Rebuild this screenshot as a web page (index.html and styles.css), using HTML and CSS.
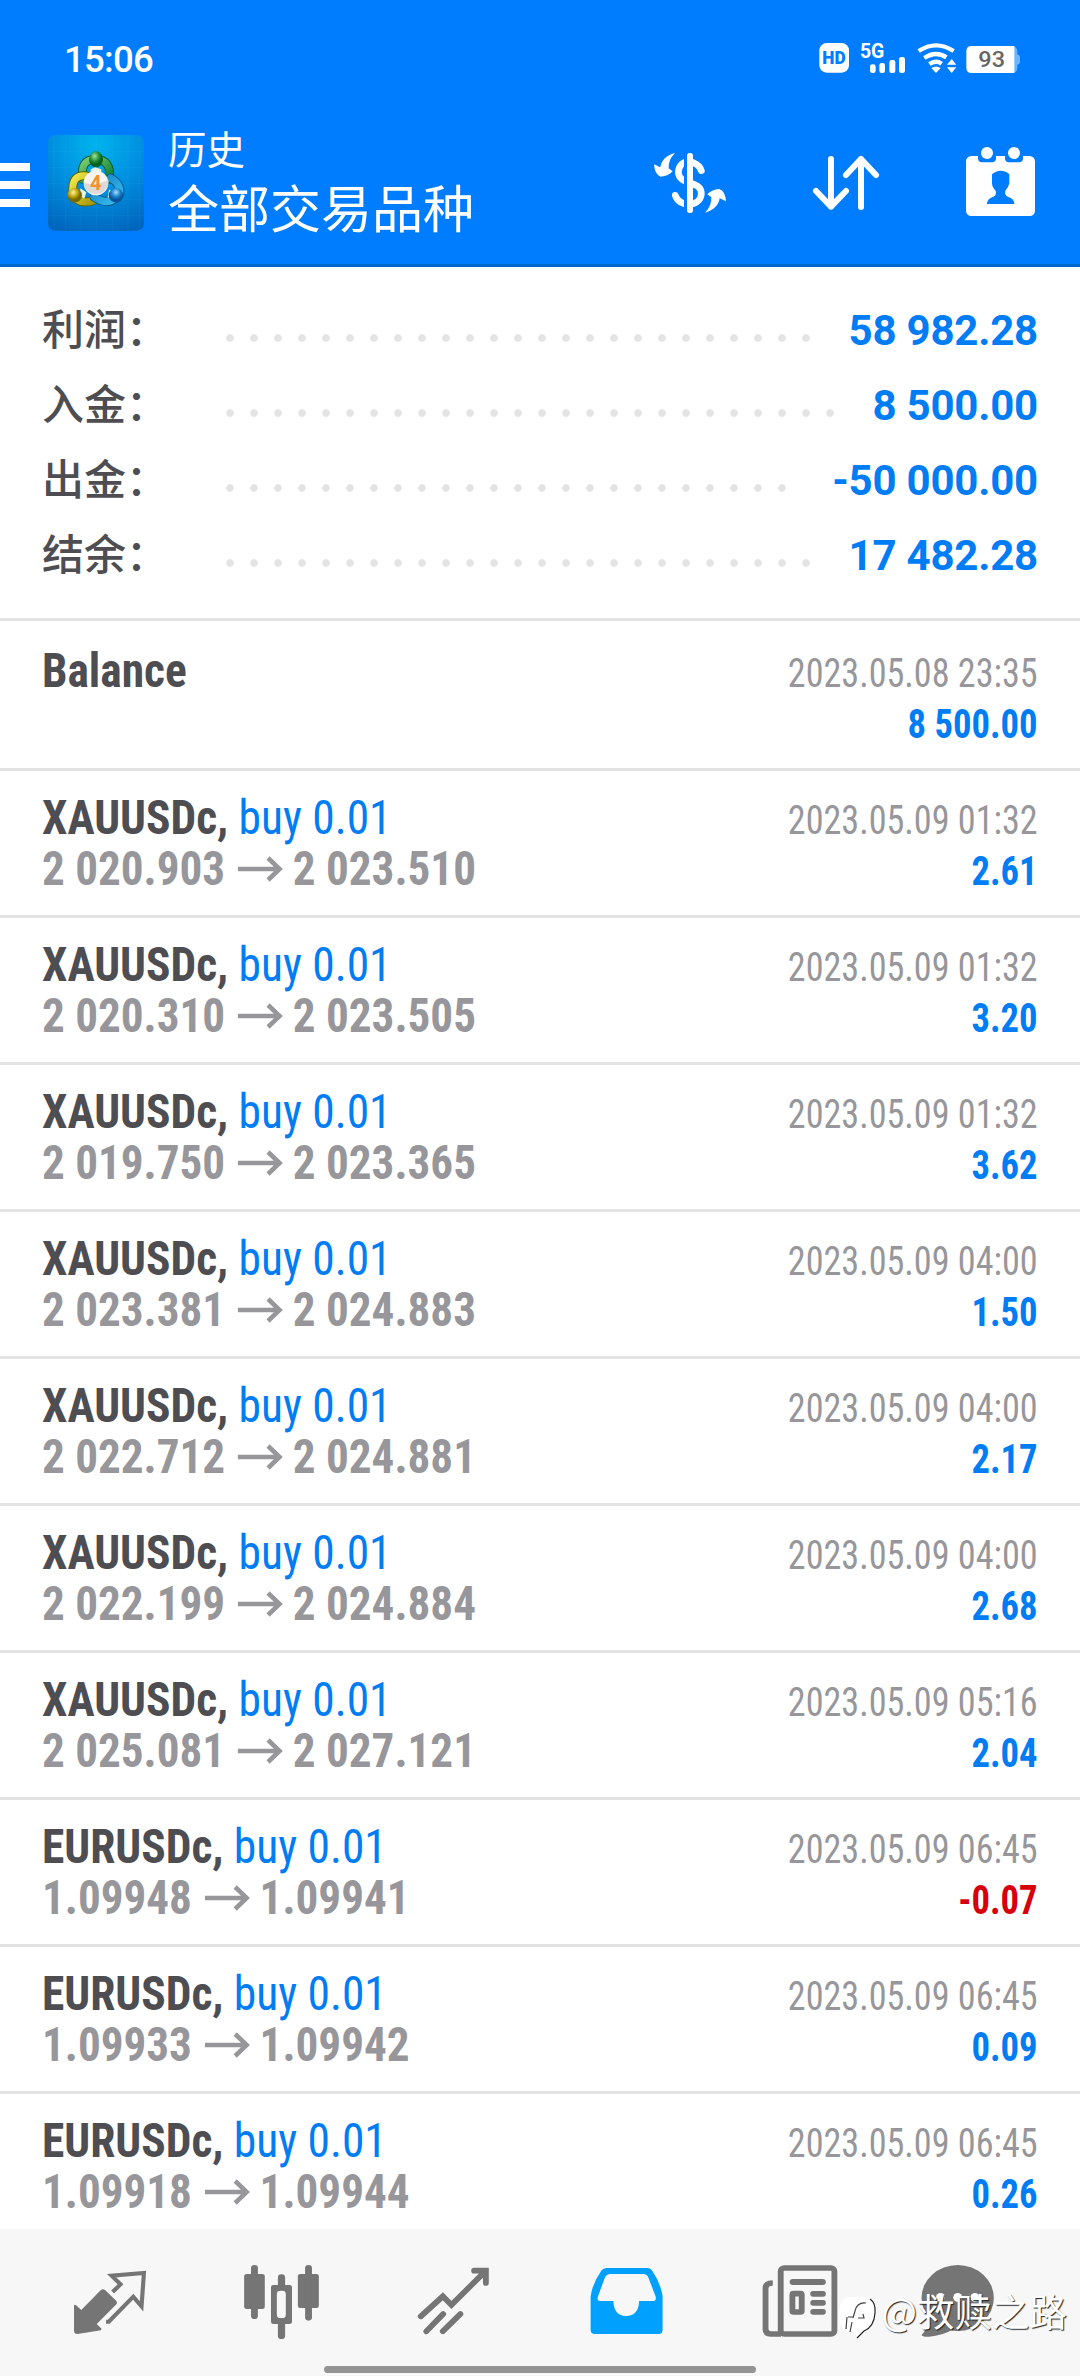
FILE: index.html
```html
<!DOCTYPE html>
<html lang="zh-CN">
<head>
<meta charset="utf-8">
<title>历史</title>
<link rel="stylesheet" href="styles.css">
</head>
<body>
<svg class="defs" width="0" height="0">
  <symbol id="arrow" viewBox="0 0 46 26" preserveAspectRatio="none"><path d="M0 13H42M30.500 2L42 13L30.500 24" fill="none" stroke="currentColor" stroke-width="4.500"/></symbol>
</svg>
<header class="header">
  <div class="status">
    <span class="time">15:06</span>
    <svg class="status-icons" viewBox="0 0 660 150">
      <rect x="28" y="24" width="89" height="89" rx="22" fill="#fff"/>
      <text x="37" y="88" font-size="53" font-weight="900" fill="#007dff" textLength="70" lengthAdjust="spacingAndGlyphs">HD</text>
      <text x="150" y="69" font-size="58" font-weight="700" fill="#fff" textLength="73" lengthAdjust="spacingAndGlyphs">5G</text>
      <g fill="#fff"><rect x="180" y="88" width="17" height="26" rx="7"/><rect x="208" y="84" width="17" height="30" rx="7"/><rect x="238" y="75" width="18" height="39" rx="7"/><rect x="267" y="66" width="18" height="48" rx="7"/>
      <path d="M364 99Q378 90 392 99L378 114Z"/><path d="M411 89L425 72L439 89ZM411 97L425 114L439 97Z"/></g>
      <path d="M326 48Q378 14 431 48M343 69Q378 46 409 67M358 87Q378 74 395 86" fill="none" stroke="#fff" stroke-width="13"/>
      <path d="M600 33H605Q622 33 622 50V58Q630 60 630 66V81Q630 87 622 89V98Q622 114 605 114H600Z" fill="#6bb5ff"/>
      <path d="M485 33H613V114H485Q469 114 469 98V49Q469 33 485 33Z" fill="#fff"/>
      <text x="505" y="97" font-size="66" font-weight="500" fill="#666" textLength="80" lengthAdjust="spacingAndGlyphs">93</text>
    </svg>
  </div>
  <div class="toolbar">
    <span class="menu"><i></i><i></i><i></i></span>
    <svg class="logo" viewBox="24 30 288 288">
      <defs>
        <radialGradient id="bg" cx=".5" cy=".1" r=".95"><stop offset="0" stop-color="#00b4ee"/><stop offset=".5" stop-color="#008fe0"/><stop offset="1" stop-color="#0066bd"/></radialGradient>
        <linearGradient id="green" x2="1" y2="1"><stop offset="0" stop-color="#7ccf72"/><stop offset="1" stop-color="#087a31"/></linearGradient>
        <linearGradient id="yellow" x2="1" y2="1"><stop offset="0" stop-color="#f2e84b"/><stop offset="1" stop-color="#a59606"/></linearGradient>
        <linearGradient id="blue" x2="1" y2="1"><stop offset="0" stop-color="#1580bd"/><stop offset="1" stop-color="#38bdf2"/></linearGradient>
        <radialGradient id="gball" cx=".4" cy=".3"><stop offset="0" stop-color="#a8dfa2"/><stop offset=".6" stop-color="#2a963c"/><stop offset="1" stop-color="#08611f"/></radialGradient>
        <radialGradient id="yball" cx=".4" cy=".3"><stop offset="0" stop-color="#fff2a0"/><stop offset=".6" stop-color="#bda80d"/><stop offset="1" stop-color="#776800"/></radialGradient>
        <radialGradient id="bball" cx=".5" cy=".3"><stop offset="0" stop-color="#a5e0fc"/><stop offset=".6" stop-color="#1b83c9"/><stop offset="1" stop-color="#07569b"/></radialGradient>
      </defs>
      <rect x="24" y="30" width="288" height="288" rx="22" fill="url(#bg)"/>
      <path d="M42 30V318M76 30V318M123 30V318M170 30V318M217 30V318M264 30V318M298 30V318M24 80H312M24 128H312M24 176H312M24 224H312M24 271H312" stroke="#4fc5ff" stroke-opacity=".13" stroke-width="2" fill="none"/>
      <g fill="none" stroke-linecap="round">
        <path d="M129 163Q118 103 167 103Q216 105 208 163" stroke="#075f32" stroke-width="27"/>
        <path d="M129 163Q118 103 167 103Q216 105 208 163" stroke="url(#green)" stroke-width="21"/>
        <path d="M140 153Q92 147 99 205Q114 242 163 226" stroke="#5d650c" stroke-width="27"/>
        <path d="M140 153Q92 147 99 205Q114 242 163 226" stroke="url(#yellow)" stroke-width="21"/>
        <path d="M211 159Q243 175 239 207Q209 247 162 216" stroke="#055d91" stroke-width="27"/>
        <path d="M211 159Q243 175 239 207Q209 247 162 216" stroke="url(#blue)" stroke-width="21"/>
      </g>
      <path d="M152 133L166 127L184 133V143H152ZM121 190L139 202L133 221L119 213ZM207 194L221 196L219 215L203 218Z" fill="#e8f3df"/>
      <ellipse cx="168" cy="103" rx="21" ry="24" fill="url(#gball)"/>
      <circle cx="104" cy="211" r="22" fill="url(#yball)"/>
      <circle cx="228" cy="211" r="22" fill="url(#bball)"/>
      <circle cx="168" cy="174" r="37" fill="#f7f4f1"/>
      <path d="M131 174Q165 184 205 165A37 37 0 0 1 131 174Z" fill="#ded9d6"/>
      <text x="150" y="195" font-size="60" font-weight="700" fill="#f29032">4</text>
    </svg>
    <div class="titles"><div class="subtitle">历史</div><h1 class="title">全部交易品种</h1></div>
    <div class="actions">
      <svg class="action" viewBox="30 0 240 255">
        <path d="M184 92C174 60 117 52 115 97C118 140 185 118 184 162C180 203 116 202 106 166" fill="none" stroke="#fff" stroke-width="20" stroke-linecap="round"/>
        <rect x="132" y="45" width="12" height="170" fill="#007dff"/>
        <rect x="141" y="39" width="18" height="180" rx="8" fill="#fff"/>
        <path id="turn" d="M105 39C78 46 64 62 61 82L42 73Q44 104 62 110Q86 108 98 94L86 85Q84 60 105 39Z" fill="#fff"/>
        <use href="#turn" transform="rotate(180 150 128.500)"/>
      </svg>
      <svg class="action" viewBox="501 0 240 255"><path d="M573 57V200M528 153L573 200L618 153M663 201V57M618 105L663 57L708 105" fill="none" stroke="#fff" stroke-width="18" stroke-linecap="round" stroke-linejoin="round"/></svg>
      <svg class="action" viewBox="960 0 240 255">
        <rect x="978" y="48" width="207" height="180" rx="16" fill="#fff"/>
        <rect x="1014" y="38" width="54" height="29" rx="12" fill="#007dff"/><rect x="1095" y="38" width="54" height="29" rx="12" fill="#007dff"/>
        <circle cx="1041" cy="39" r="18" fill="#fff"/><circle cx="1122" cy="39" r="18" fill="#fff"/>
        <path d="M1056 103Q1068 92 1082 92Q1098 92 1108 103V130Q1105 144 1096 152Q1093 166 1104 170Q1123 176 1123 192H1041Q1041 176 1060 170Q1071 164 1067 152Q1056 142 1056 130Z" fill="#007dff"/>
      </svg>
    </div>
  </div>
</header>
<main class="content">
  <section class="summary">
    <div class="total"><span class="label">利润：</span><span class="dots"></span><b>58 982.28</b></div>
    <div class="total"><span class="label">入金：</span><span class="dots"></span><b>8 500.00</b></div>
    <div class="total"><span class="label">出金：</span><span class="dots"></span><b>-50 000.00</b></div>
    <div class="total"><span class="label">结余：</span><span class="dots"></span><b>17 482.28</b></div>
  </section>
  <ul class="deals">
    <li class="deal balance"><div><div class="symbol">Balance</div></div><div class="right"><div class="date">2023.05.08 23:35</div><div class="amount">8 500.00</div></div></li>
    <li class="deal"><div><div class="symbol">XAUUSDc, <span class="side">buy 0.01</span></div><div class="prices">2 020.903<svg class="arrow"><use href="#arrow"/></svg>2 023.510</div></div><div class="right"><div class="date">2023.05.09 01:32</div><div class="amount">2.61</div></div></li>
    <li class="deal"><div><div class="symbol">XAUUSDc, <span class="side">buy 0.01</span></div><div class="prices">2 020.310<svg class="arrow"><use href="#arrow"/></svg>2 023.505</div></div><div class="right"><div class="date">2023.05.09 01:32</div><div class="amount">3.20</div></div></li>
    <li class="deal"><div><div class="symbol">XAUUSDc, <span class="side">buy 0.01</span></div><div class="prices">2 019.750<svg class="arrow"><use href="#arrow"/></svg>2 023.365</div></div><div class="right"><div class="date">2023.05.09 01:32</div><div class="amount">3.62</div></div></li>
    <li class="deal"><div><div class="symbol">XAUUSDc, <span class="side">buy 0.01</span></div><div class="prices">2 023.381<svg class="arrow"><use href="#arrow"/></svg>2 024.883</div></div><div class="right"><div class="date">2023.05.09 04:00</div><div class="amount">1.50</div></div></li>
    <li class="deal"><div><div class="symbol">XAUUSDc, <span class="side">buy 0.01</span></div><div class="prices">2 022.712<svg class="arrow"><use href="#arrow"/></svg>2 024.881</div></div><div class="right"><div class="date">2023.05.09 04:00</div><div class="amount">2.17</div></div></li>
    <li class="deal"><div><div class="symbol">XAUUSDc, <span class="side">buy 0.01</span></div><div class="prices">2 022.199<svg class="arrow"><use href="#arrow"/></svg>2 024.884</div></div><div class="right"><div class="date">2023.05.09 04:00</div><div class="amount">2.68</div></div></li>
    <li class="deal"><div><div class="symbol">XAUUSDc, <span class="side">buy 0.01</span></div><div class="prices">2 025.081<svg class="arrow"><use href="#arrow"/></svg>2 027.121</div></div><div class="right"><div class="date">2023.05.09 05:16</div><div class="amount">2.04</div></div></li>
    <li class="deal"><div><div class="symbol">EURUSDc, <span class="side">buy 0.01</span></div><div class="prices">1.09948<svg class="arrow"><use href="#arrow"/></svg>1.09941</div></div><div class="right"><div class="date">2023.05.09 06:45</div><div class="amount loss">-0.07</div></div></li>
    <li class="deal"><div><div class="symbol">EURUSDc, <span class="side">buy 0.01</span></div><div class="prices">1.09933<svg class="arrow"><use href="#arrow"/></svg>1.09942</div></div><div class="right"><div class="date">2023.05.09 06:45</div><div class="amount">0.09</div></div></li>
    <li class="deal"><div><div class="symbol">EURUSDc, <span class="side">buy 0.01</span></div><div class="prices">1.09918<svg class="arrow"><use href="#arrow"/></svg>1.09944</div></div><div class="right"><div class="date">2023.05.09 06:45</div><div class="amount">0.26</div></div></li>
  </ul>
</main>
<nav class="tabs">
  <svg class="tab" viewBox="69.700 87 499.500 441" preserveAspectRatio="none">
    <path d="M215 314L221 316L236 330L293 270Q299 265 305 270L338 303Q342 308 338 313L281 372L295 386L293 391L225 402Q215 402 215 393Z" fill="currentColor"/>
    <path d="M327 276L350 253L324 227L418 219L411 319L387 290L316 365H308" fill="none" stroke="currentColor" stroke-width="12"/>
  </svg>
  <svg class="tab" viewBox="569.200 87 499.500 441" preserveAspectRatio="none">
    <g fill="currentColor"><rect x="709" y="222" width="60" height="105" rx="7"/><rect x="729" y="195" width="20" height="162" rx="10"/><rect x="807" y="223" width="21" height="194" rx="10"/><rect x="787" y="255" width="61" height="117" rx="7"/><rect x="865" y="222" width="61" height="102" rx="7"/><rect x="886" y="195" width="20" height="167" rx="10"/></g>
    <rect x="804" y="272" width="26" height="82" rx="10" fill="#f7f7f7"/>
  </svg>
  <svg class="tab" viewBox="1068.700 87 499.500 441" preserveAspectRatio="none">
    <path d="M1222 349L1286 289L1311 315L1411 212M1377 212H1411V249M1238 394L1287 342M1286 394L1337 342" fill="none" stroke="currentColor" stroke-width="17" stroke-linecap="round"/>
  </svg>
  <svg class="tab active" viewBox="0 87 499.500 441" preserveAspectRatio="none">
    <path fill-rule="evenodd" fill="currentColor" d="M147 290Q152 250 178 212Q183 204 193 204H312Q320 204 325 211Q350 248 356 288V390Q356 402 344 402H160Q147 402 147 390ZM205 222Q193 222 188 234L168 290Q164 303 178 303H213Q215 348 250 348Q286 348 288 303H326Q339 303 336 290L315 233Q311 222 300 222Z"/>
  </svg>
  <svg class="tab" viewBox="499.500 87 499.500 441" preserveAspectRatio="none">
    <g fill="none" stroke="currentColor" stroke-width="17"><rect x="699" y="204" width="156" height="198" rx="10"/><path d="M676 249Q655 249 655 265V387Q655 402 670 402H700"/><rect x="733" y="281" width="27" height="55" rx="3"/></g>
    <g fill="currentColor"><rect x="725" y="237" width="105" height="18" rx="9"/><rect x="785" y="273" width="45" height="17" rx="8"/><rect x="785" y="300" width="45" height="17" rx="8"/><rect x="785" y="327" width="45" height="17" rx="8"/></g>
  </svg>
  <svg class="tab" viewBox="999 87 499.500 441" preserveAspectRatio="none">
    <ellipse cx="1213" cy="294" rx="105" ry="99" fill="currentColor"/><path d="M1118 330Q1142 368 1108 405Q1112 412 1130 410Q1168 408 1200 388Z" fill="currentColor"/>
    <g fill="#fff"><circle cx="1163" cy="292" r="13"/><circle cx="1213" cy="292" r="13"/><circle cx="1263" cy="292" r="13"/></g>
  </svg>
</nav>
<div class="home-bar"></div>
<svg class="watermark" viewBox="0 0 320 100">
  <path d="M87 47H104Q116 49 115 62Q114 78 103 81L97 88L95 82Q80 82 79 67Q79 50 87 47Z" fill="#fff"/>
  <path d="M106 53Q97 52 95 61L93 68M88 67H93M98 68H104L103 64M87 67L86 79M92 72L90 82" fill="none" stroke="#444" stroke-width="1.200"/>
  <path d="M110 49Q116 53 115 63Q114 77 104 81L97 88" fill="none" stroke="#222" stroke-width="1.200"/>
  <text class="watermark-text" x="121.500" y="75.500">@救赎之路</text>
</svg>
</body>
</html>
```
FILE: styles.css
```css
* { box-sizing: border-box; }
body { margin: 0; width: 1080px; height: 2376px; overflow: hidden; position: relative; display: flex; flex-direction: column; background: #fff; font-family: Roboto, "Noto Sans CJK SC", sans-serif; }
.defs { position: absolute; }
svg { display: block; flex: none; }

.header { height: 267px; flex: none; background: #007dff; border-bottom: 3px solid #0068c8; color: #fff; }
.status { height: 117px; padding: 35px 50px 0 64px; display: flex; justify-content: space-between; }
.time { font-size: 36.500px; font-weight: 500; line-height: 50px; letter-spacing: -.7px; }
.status-icons { width: 220px; height: 50px; }
.toolbar { display: flex; align-items: flex-start; padding-right: 40px; }
.menu { width: 30px; margin: 46px 18px 0 0; display: flex; flex-direction: column; gap: 10px; }
.menu i { height: 8px; background: #fff; }
.logo { width: 96px; height: 96px; margin-top: 18px; }
.titles { margin: 4px 0 0 24px; font-family: "Noto Sans CJK SC", sans-serif; flex: 1; }
.subtitle { font-size: 38.500px; line-height: 52px; }
.title { margin: 0; font-size: 51px; line-height: 66px; font-weight: 400; }
.actions { display: flex; margin-top: 23px; }
.action { width: 80px; height: 85px; margin-left: 73px; }
.action:first-child { margin: 0 4px 0 0; }

.content { flex: 1; min-height: 0; overflow: hidden; }
.summary { padding: 26px 42px 25px; }
.total { display: flex; height: 75px; color: #007df5; font-size: 42px; line-height: 75px; letter-spacing: -.2px; }
.label { width: 168px; color: #4d4d52; font-weight: 500; line-height: 67px; letter-spacing: 0; font-family: "Noto Sans CJK SC", sans-serif; }
.dots { flex: 1; margin-right: 34px; background: radial-gradient(circle at 20px 45px, #e4e4e4 3.400px, transparent 4.200px) 0 0 / 24px 75px repeat-x; }

.deals { list-style: none; margin: 0; padding: 0; }
.deal { display: flex; justify-content: space-between; height: 147px; padding: 21px 42px 0; border-top: 3px solid #e3e3e3; font-family: "Roboto Condensed", Roboto, sans-serif; font-size: 48px; line-height: 51px; }
.balance { height: 150px; padding-top: 24px; }
.symbol { color: #4d4d52; font-weight: 700; transform: scaleX(.946); transform-origin: left; }
.side { color: #007df5; font-weight: 400; }
.prices { display: flex; color: #97979b; font-weight: 700; transform: scaleX(.94); transform-origin: left; }
.arrow { width: 49px; height: 26px; margin: 13px 10px 0 13px; }
.right { padding-top: 3px; text-align: right; font-size: 40px; }
.date { color: #97979b; transform: scaleX(.903); transform-origin: right; }
.amount { color: #007df5; font-weight: 700; transform: scaleX(.915); transform-origin: right; }
.loss { color: #d6000b; }

.tabs { display: flex; flex: none; height: 147px; padding: 0 24px; background: #f7f7f7; color: #757575; }
.tab { width: 172px; height: 147px; }
.active { color: #00a0ff; }
.home-bar { position: absolute; left: 324px; top: 2366px; width: 432px; height: 7px; border-radius: 4px; background: #949494; }
.watermark { position: absolute; left: 760px; top: 2250px; width: 320px; height: 100px; }
.watermark-text { font: 400 37.500px "Noto Sans CJK SC", sans-serif; fill: #fff; text-shadow: 1px 1px 1px #222; }
```
